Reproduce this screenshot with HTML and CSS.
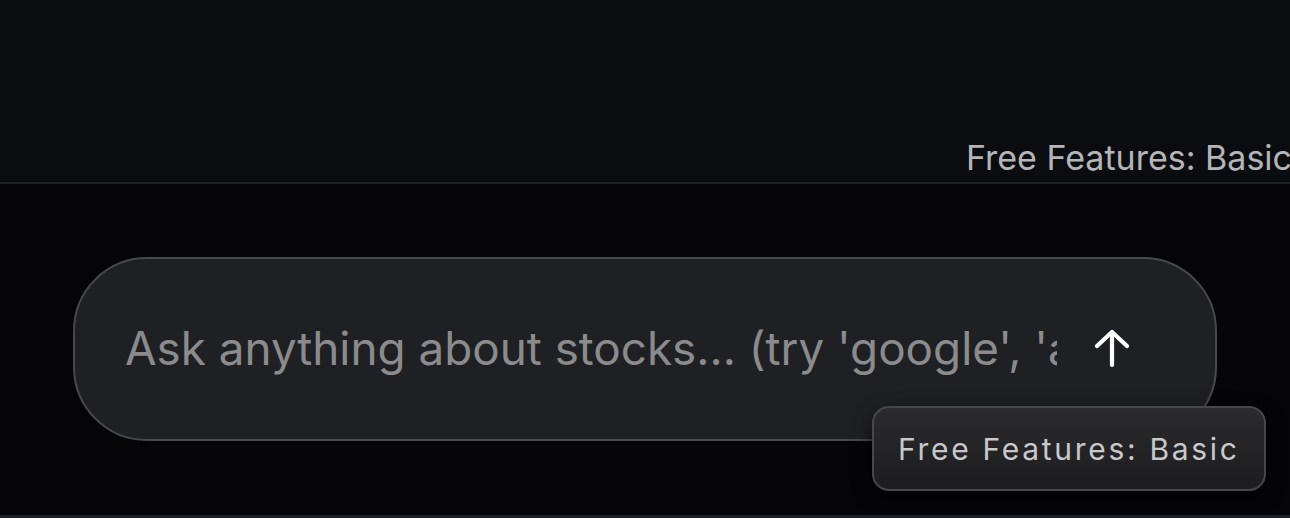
FILE: index.html
```html
<!DOCTYPE html>
<html lang="en">
<head>
<meta charset="utf-8">
<title>Stock chat</title>
<link rel="stylesheet" href="styles.css">
</head>
<body>
<div class="page">
  <header class="top">
    <span class="plan">Free Features: Basic</span>
  </header>
  <main class="main">
    <div class="composer">
      <div class="field">
        <span class="placeholder">Ask anything about stocks... (try 'google', 'apple', 'tesla')</span>
      </div>
      <button class="send" type="button" aria-label="Send">
        <svg width="40" height="40" viewBox="0 0 40 40" fill="none" stroke="#ffffff" stroke-width="4.2" stroke-linecap="round" stroke-linejoin="round">
          <path d="M20 37V5"/>
          <path d="M5 18L20 4L35 18"/>
        </svg>
      </button>
      <div class="tooltip">Free Features: Basic</div>
    </div>
  </main>
  <div class="bottom-bar"></div>
</div>
</body>
</html>
```
FILE: styles.css
```css
* { box-sizing: border-box; }
html, body {
  margin: 0;
  padding: 0;
  width: 1290px;
  height: 518px;
  overflow: hidden;
  background: #050508;
  font-family: Inter, "Noto Sans", "Liberation Sans", sans-serif;
}
.page {
  display: flex;
  flex-direction: column;
  height: 518px;
}
.top {
  height: 184px;
  flex: none;
  background: #0b0c10;
  border-bottom: 2px solid #222326;
  display: flex;
  justify-content: flex-end;
  align-items: flex-end;
  padding-bottom: 4px;
  overflow: hidden;
}
.plan {
  font-size: 34px;
  line-height: 40px;
  color: #b4b5b8;
  white-space: nowrap;
  margin-right: -2px;
}
.main {
  flex: 1;
  display: flex;
  justify-content: center;
  align-items: flex-start;
  padding-top: 73px;
}
.composer {
  position: relative;
  width: 1144px;
  height: 184px;
  background: #1f2023;
  border: 2px solid #48494c;
  border-radius: 74px;
  display: flex;
  align-items: center;
  padding: 0 83px 0 50px;
  gap: 35px;
}
.field {
  flex: 1;
  overflow: hidden;
  white-space: nowrap;
}
.placeholder {
  font-size: 45.8px;
  color: #8b8b8e;
  line-height: 56px;
}
.send {
  flex: none;
  width: 40px;
  height: 40px;
  padding: 0;
  border: 0;
  background: transparent;
  display: flex;
  align-items: center;
  justify-content: center;
  margin-top: -2px;
}
.send svg { display: block; }
.tooltip {
  position: absolute;
  left: 797px;
  top: 147px;
  width: 394px;
  height: 85px;
  border: 2px solid #47474a;
  border-radius: 17px;
  background: linear-gradient(180deg, #2b2b2e 0%, #1d1d20 100%);
  box-shadow: 0 6px 18px rgba(0,0,0,0.6);
  display: flex;
  align-items: center;
  padding-left: 24px;
  font-size: 30px;
  letter-spacing: 2.7px;
  color: #c9c9cb;
  white-space: nowrap;
}
.bottom-bar {
  height: 3px;
  flex: none;
  background: #1c2029;
}
```
